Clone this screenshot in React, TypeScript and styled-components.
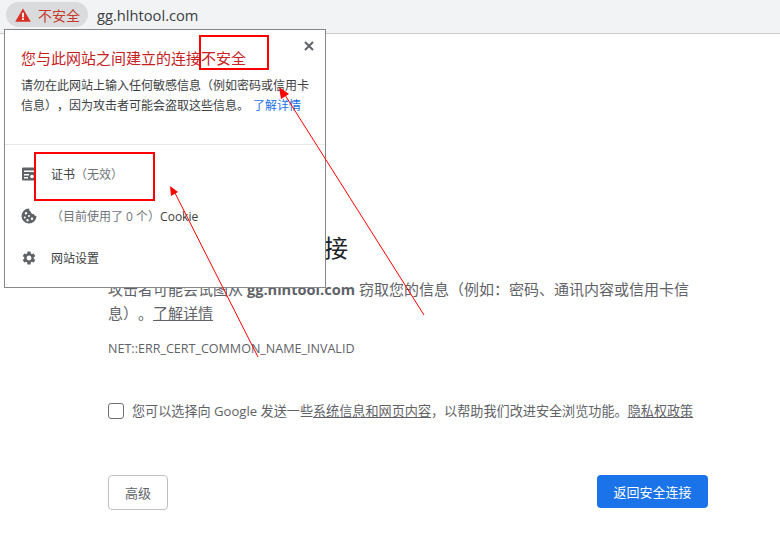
import React from "react";
import styled, { createGlobalStyle } from "styled-components";

const Global = createGlobalStyle`
  html, body { margin: 0; padding: 0; background: #fff; }
  body {
    font-family: "Open Sans", "Noto Sans CJK SC", sans-serif;
    overflow: hidden;
    text-spacing-trim: space-all;
  }
`;

const Page = styled.div`
  position: relative;
  width: 780px;
  height: 560px;
  overflow: hidden;
  background: #fff;
`;

const TopBar = styled.header`
  height: 34px;
  box-sizing: border-box;
  background: #f1f3f4;
  border-bottom: 1px solid #c9cbcd;
  display: flex;
  align-items: center;
  padding: 0 0 4px 6px;
  gap: 9px;
`;

const Chip = styled.div`
  width: 82px;
  height: 25px;
  box-sizing: border-box;
  border-radius: 13px;
  background: #d9dbdd;
  display: flex;
  align-items: center;
  gap: 7px;
  padding-left: 9px;
  color: #c5392b;
  font-size: 14px;
`;

const Url = styled.span`
  color: #3c4043;
  font-size: 14.7px;
`;

const Main = styled.main`
  padding: 198px 0 0 108px;
  width: 600px;
  color: #5f6368;
`;

const Title = styled.h1`
  margin: 0;
  font-size: 24px;
  font-weight: 400;
  line-height: 32px;
  color: #202124;
`;

const Body = styled.p`
  margin: 13px 0 0;
  width: 590px;
  font-size: 15px;
  line-height: 24px;
  b { font-weight: 700; font-size: 14.6px; }
`;

const Link = styled.a`
  color: #5f6368;
  text-decoration: underline;
`;

const ErrorCode = styled.div`
  margin-top: 15px;
  font-size: 12.55px;
  line-height: 18px;
`;

const ConsentRow = styled.label`
  margin-top: 43px;
  display: flex;
  align-items: center;
  gap: 8px;
  font-size: 13.12px;
  white-space: nowrap;
  line-height: 20px;
`;

const Box = styled.span`
  width: 14px;
  height: 14px;
  box-sizing: content-box;
  flex: none;
  border: 1px solid #6e7175;
  border-radius: 3px;
`;

const Actions = styled.div`
  margin-top: 54px;
  display: flex;
  justify-content: space-between;
  align-items: flex-start;
`;

const OutlineButton = styled.button`
  width: 60px;
  height: 35px;
  border: 1px solid #bdc1c6;
  border-radius: 4px;
  background: #fff;
  color: #5f6368;
  font: 13px "Open Sans", "Noto Sans CJK SC", sans-serif;
  padding: 0;
`;

const PrimaryButton = styled.button`
  width: 111px;
  height: 33px;
  border: 0;
  border-radius: 4px;
  background: #1a73e8;
  color: #fff;
  font: 13px "Open Sans", "Noto Sans CJK SC", sans-serif;
  padding: 0;
`;

const Popup = styled.section`
  position: absolute;
  left: 4px;
  top: 29px;
  width: 322px;
  height: 259px;
  box-sizing: border-box;
  background: #fff;
  border: 1px solid #85878a;
  display: flex;
  flex-direction: column;
`;

const PopupTop = styled.div`
  position: relative;
  height: 115px;
  box-sizing: border-box;
  padding: 16px 10px 0 16px;
  border-bottom: 1px solid #e6e7e8;
`;

const PopupTitle = styled.div`
  color: #c5221f;
  font-size: 15px;
  line-height: 24px;
`;

const PopupText = styled.div`
  margin-top: 6px;
  color: #3c4043;
  font-size: 12px;
  line-height: 20px;
`;

const PopupLink = styled.a`
  color: #1a73e8;
  margin-left: 4px;
`;

const Close = styled.span`
  position: absolute;
  right: 11px;
  top: 11px;
  display: flex;
`;

const Menu = styled.div`
  padding-top: 8px;
  display: flex;
  flex-direction: column;
`;

const MenuRow = styled.div`
  height: 42px;
  display: flex;
  align-items: center;
  gap: 14px;
  padding-left: 16px;
  font-size: 12px;
  color: #3c4043;
`;

const IconSlot = styled.span`
  width: 16px;
  height: 16px;
  display: flex;
  flex: none;
`;

const Muted = styled.span`
  color: #70757a;
`;

const Overlay = styled.svg`
  position: absolute;
  left: 0;
  top: 0;
  pointer-events: none;
`;

const Warning = () => (
  <svg width="16" height="14" viewBox="0 0 16 14">
    <path d="M8 0.5 L15.8 13.7 H0.2 Z" fill="#d93025" />
    <rect x="7.1" y="4.8" width="1.8" height="4.6" fill="#fff" />
    <rect x="7.1" y="10.2" width="1.8" height="1.8" fill="#fff" />
  </svg>
);

const Cert = () => (
  <svg width="16" height="16" viewBox="0 0 16 16">
    <path fillRule="evenodd" fill="#5f6368" d="M2 1.500h12a1 1 0 0 1 1 1v11a1 1 0 0 1-1 1H2a1 1 0 0 1-1-1v-11a1 1 0 0 1 1-1zM3 4.500v1.500h10V4.500zM3 8v1.500h5V8zM3 11v1.500h4V11z" />
    <circle cx="11" cy="10.500" r="1.800" fill="#fff" />
  </svg>
);

const CookieIcon = () => (
  <svg width="16" height="16" viewBox="0 0 16 16">
    <path fillRule="evenodd" fill="#5f6368" d="M8 0.5a7.5 7.5 0 1 0 7.5 7.5c-1.5 0-2.5-.8-2.7-2-1.500.2-2.800-.8-2.900-2.300C8.700 3.500 8 2 8 .5zM5 4a1.200 1.200 0 1 1 0 2.400A1.200 1.200 0 0 1 5 4zM3.800 8.500a1 1 0 1 1 0 2 1 1 0 0 1 0-2zM8 7a1 1 0 1 1 0 2 1 1 0 0 1 0-2zM6.500 11a1.200 1.200 0 1 1 0 2.400 1.200 1.200 0 0 1 0-2.400zM11 9.500a1.200 1.200 0 1 1 0 2.400 1.200 1.200 0 0 1 0-2.400z" />
  </svg>
);

const Gear = () => (
  <svg width="16" height="16" viewBox="0 0 24 24">
    <path fill="#5f6368" d="M19.140 12.940c.040-.300.060-.610.060-.940 0-.320-.020-.640-.070-.940l2.030-1.580a.49.49 0 0 0 .120-.610l-1.920-3.320a.49.49 0 0 0-.590-.220l-2.390.960c-.500-.380-1.030-.700-1.620-.940l-.360-2.540a.48.480 0 0 0-.480-.410h-3.840a.47.470 0 0 0-.470.410l-.360 2.540c-.590.240-1.130.570-1.620.940l-2.390-.960a.48.480 0 0 0-.590.220L2.740 8.870a.47.470 0 0 0 .120.610l2.030 1.580c-.050.300-.090.630-.09.940s.020.640.070.940l-2.030 1.580a.49.49 0 0 0-.120.610l1.920 3.320c.120.220.370.290.590.220l2.390-.960c.500.380 1.030.700 1.620.940l.360 2.540c.050.240.240.410.480.410h3.840c.240 0 .440-.170.470-.410l.360-2.540c.590-.240 1.130-.560 1.620-.940l2.390.960c.220.080.470 0 .590-.220l1.920-3.320a.46.46 0 0 0-.120-.610l-2.010-1.580zM12 15.600A3.610 3.610 0 0 1 8.400 12c0-1.980 1.620-3.600 3.600-3.600s3.600 1.620 3.600 3.600-1.620 3.600-3.600 3.600z" />
  </svg>
);

const CloseIcon = () => (
  <svg width="10" height="10" viewBox="0 0 10 10">
    <path d="M1 1 L9 9 M9 1 L1 9" stroke="#5f6368" strokeWidth="2" />
  </svg>
);

const Annotations = () => (
  <Overlay width="780" height="560" viewBox="0 0 780 560">
    <rect x="200" y="36" width="68" height="33" fill="none" stroke="#ff0000" strokeWidth="2" />
    <rect x="35" y="153" width="119" height="47" fill="none" stroke="#ff0000" strokeWidth="2" />
    <line x1="424" y1="315" x2="285" y2="95" stroke="#ff0000" strokeWidth="1" />
    <path d="M279 87 L289 94 L281 99 Z" fill="#ff0000" />
    <line x1="258" y1="357" x2="175" y2="193" stroke="#ff0000" strokeWidth="1" />
    <path d="M170 186 L178 192 L171 196 Z" fill="#ff0000" />
  </Overlay>
);

export default function App() {
  return (
    <Page>
      <Global />
      <TopBar>
        <Chip>
          <Warning />
          <span>不安全</span>
        </Chip>
        <Url>gg.hlhtool.com</Url>
      </TopBar>
      <Main>
        <Title>您的连接不是私密连接</Title>
        <Body>
          攻击者可能会试图从 <b>gg.hlhtool.com</b> 窃取您的信息（例如：密码、通讯内容或信用卡信息）。<Link>了解详情</Link>
        </Body>
        <ErrorCode>NET::ERR_CERT_COMMON_NAME_INVALID</ErrorCode>
        <ConsentRow>
          <Box />
          <span>
            您可以选择向 Google 发送一些<Link>系统信息和网页内容</Link>，以帮助我们改进安全浏览功能。<Link>隐私权政策</Link>
          </span>
        </ConsentRow>
        <Actions>
          <OutlineButton>高级</OutlineButton>
          <PrimaryButton>返回安全连接</PrimaryButton>
        </Actions>
      </Main>
      <Popup>
        <PopupTop>
          <PopupTitle>您与此网站之间建立的连接不安全</PopupTitle>
          <PopupText>
            请勿在此网站上输入任何敏感信息（例如密码或信用卡信息），因为攻击者可能会盗取这些信息。
            <PopupLink>了解详情</PopupLink>
          </PopupText>
          <Close>
            <CloseIcon />
          </Close>
        </PopupTop>
        <Menu>
          <MenuRow>
            <IconSlot>
              <Cert />
            </IconSlot>
            <span>
              证书<Muted>（无效）</Muted>
            </span>
          </MenuRow>
          <MenuRow>
            <IconSlot>
              <CookieIcon />
            </IconSlot>
            <span>
              <Muted>（目前使用了 0 个）</Muted>Cookie
            </span>
          </MenuRow>
          <MenuRow>
            <IconSlot>
              <Gear />
            </IconSlot>
            <span>网站设置</span>
          </MenuRow>
        </Menu>
      </Popup>
      <Annotations />
    </Page>
  );
}
